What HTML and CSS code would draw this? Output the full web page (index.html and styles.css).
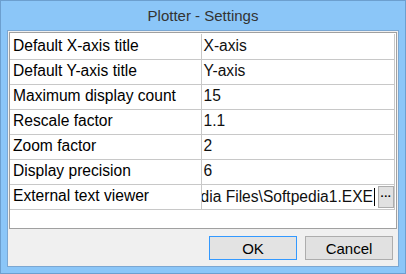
FILE: index.html
```html
<!DOCTYPE html>
<html>
<head lang="en">
    <meta charset="UTF-8">
    <title>Plotter - Settings</title>
    <link rel="stylesheet" href="styles.css">
</head>
<body>

<div class="window">
    <div class="titlebar">Plotter - Settings</div>
    <div class="client">
        <div class="grid">
            <table class="props">
                <tr><td>Default X-axis title</td><td>X-axis</td></tr>
                <tr><td>Default Y-axis title</td><td>Y-axis</td></tr>
                <tr><td>Maximum display count</td><td>15</td></tr>
                <tr><td>Rescale factor</td><td>1.1</td></tr>
                <tr><td>Zoom factor</td><td>2</td></tr>
                <tr><td>Display precision</td><td>6</td></tr>
                <tr>
                    <td>External text viewer</td>
                    <td class="edit">
                        <div class="editor">
                            <div class="path"><span class="caret">edia Files\Softpedia1.EXE</span></div>
                            <span class="browse">···</span>
                        </div>
                    </td>
                </tr>
            </table>
        </div>
        <div class="actions">
            <button class="btn default">OK</button>
            <button class="btn">Cancel</button>
        </div>
    </div>
</div>

</body>
</html>
```

FILE: styles.css
```css
*{
    margin: 0px;
    padding: 0px;
    box-sizing: border-box;
}
body{
    font-family: "Liberation Sans", Arial, sans-serif;
    background: #8bc6f8;
}
.window{
    width: 406px;
    height: 274px;
    background: #8bc6f8;
    border: 1px solid #6c9fcf;
    padding: 0px 6px 6px 6px;
    display: flex;
    flex-direction: column;
}
.titlebar{
    height: 29px;
    line-height: 29px;
    text-align: center;
    font-size: 15px;
    color: #333333;
}
.client{
    flex: 1;
    background: #f0f0f0;
    border: 1px solid #7ba7d2;
    padding: 1px 1px 6px 1px;
    display: flex;
    flex-direction: column;
}
.grid{
    height: 197px;
    width: 388px;
    background: #ffffff;
    border: 1px solid #a0a0a0;
    padding: 1px 1px 0px 0px;
    overflow: hidden;
}
.props{
    width: 385px;
    border-collapse: collapse;
    table-layout: fixed;
    font-size: 15.6px;
    color: #000000;
}
.props td{
    height: 25px;
    border-right: 1px solid #c8c8c8;
    border-bottom: 1px solid #c8c8c8;
    padding: 0px 0px 1px 3px;
    white-space: nowrap;
    overflow: hidden;
}
.props td:nth-child(1){
    width: 191px;
}
.props td:nth-child(2){
    padding-left: 2px;
    color: #101010;
}
.props td.edit{
    padding: 0px;
}
.editor{
    display: flex;
    align-items: center;
    height: 24px;
}
.path{
    flex: 1;
    display: flex;
    justify-content: flex-end;
    overflow: hidden;
    padding-right: 3px;
}
.caret{
    white-space: nowrap;
    border-right: 1px solid #000000;
    padding-right: 1px;
    line-height: 18px;
}
.browse{
    width: 16px;
    height: 22px;
    margin-top: 1px;
    background: #e1e1e1;
    border: 1px solid #adadad;
    font-size: 11px;
    font-weight: bold;
    line-height: 18px;
    text-align: center;
    color: #000000;
}
.actions{
    display: flex;
    justify-content: flex-end;
    gap: 8px;
    margin-top: 7px;
    padding-right: 4px;
}
.btn{
    width: 88px;
    height: 24px;
    background: #e1e1e1;
    border: 1px solid #adadad;
    font-family: "Liberation Sans", Arial, sans-serif;
    font-size: 15px;
    color: #000000;
}
.btn.default{
    border-color: #3399ff;
    background: #e3e3e3;
}
```
